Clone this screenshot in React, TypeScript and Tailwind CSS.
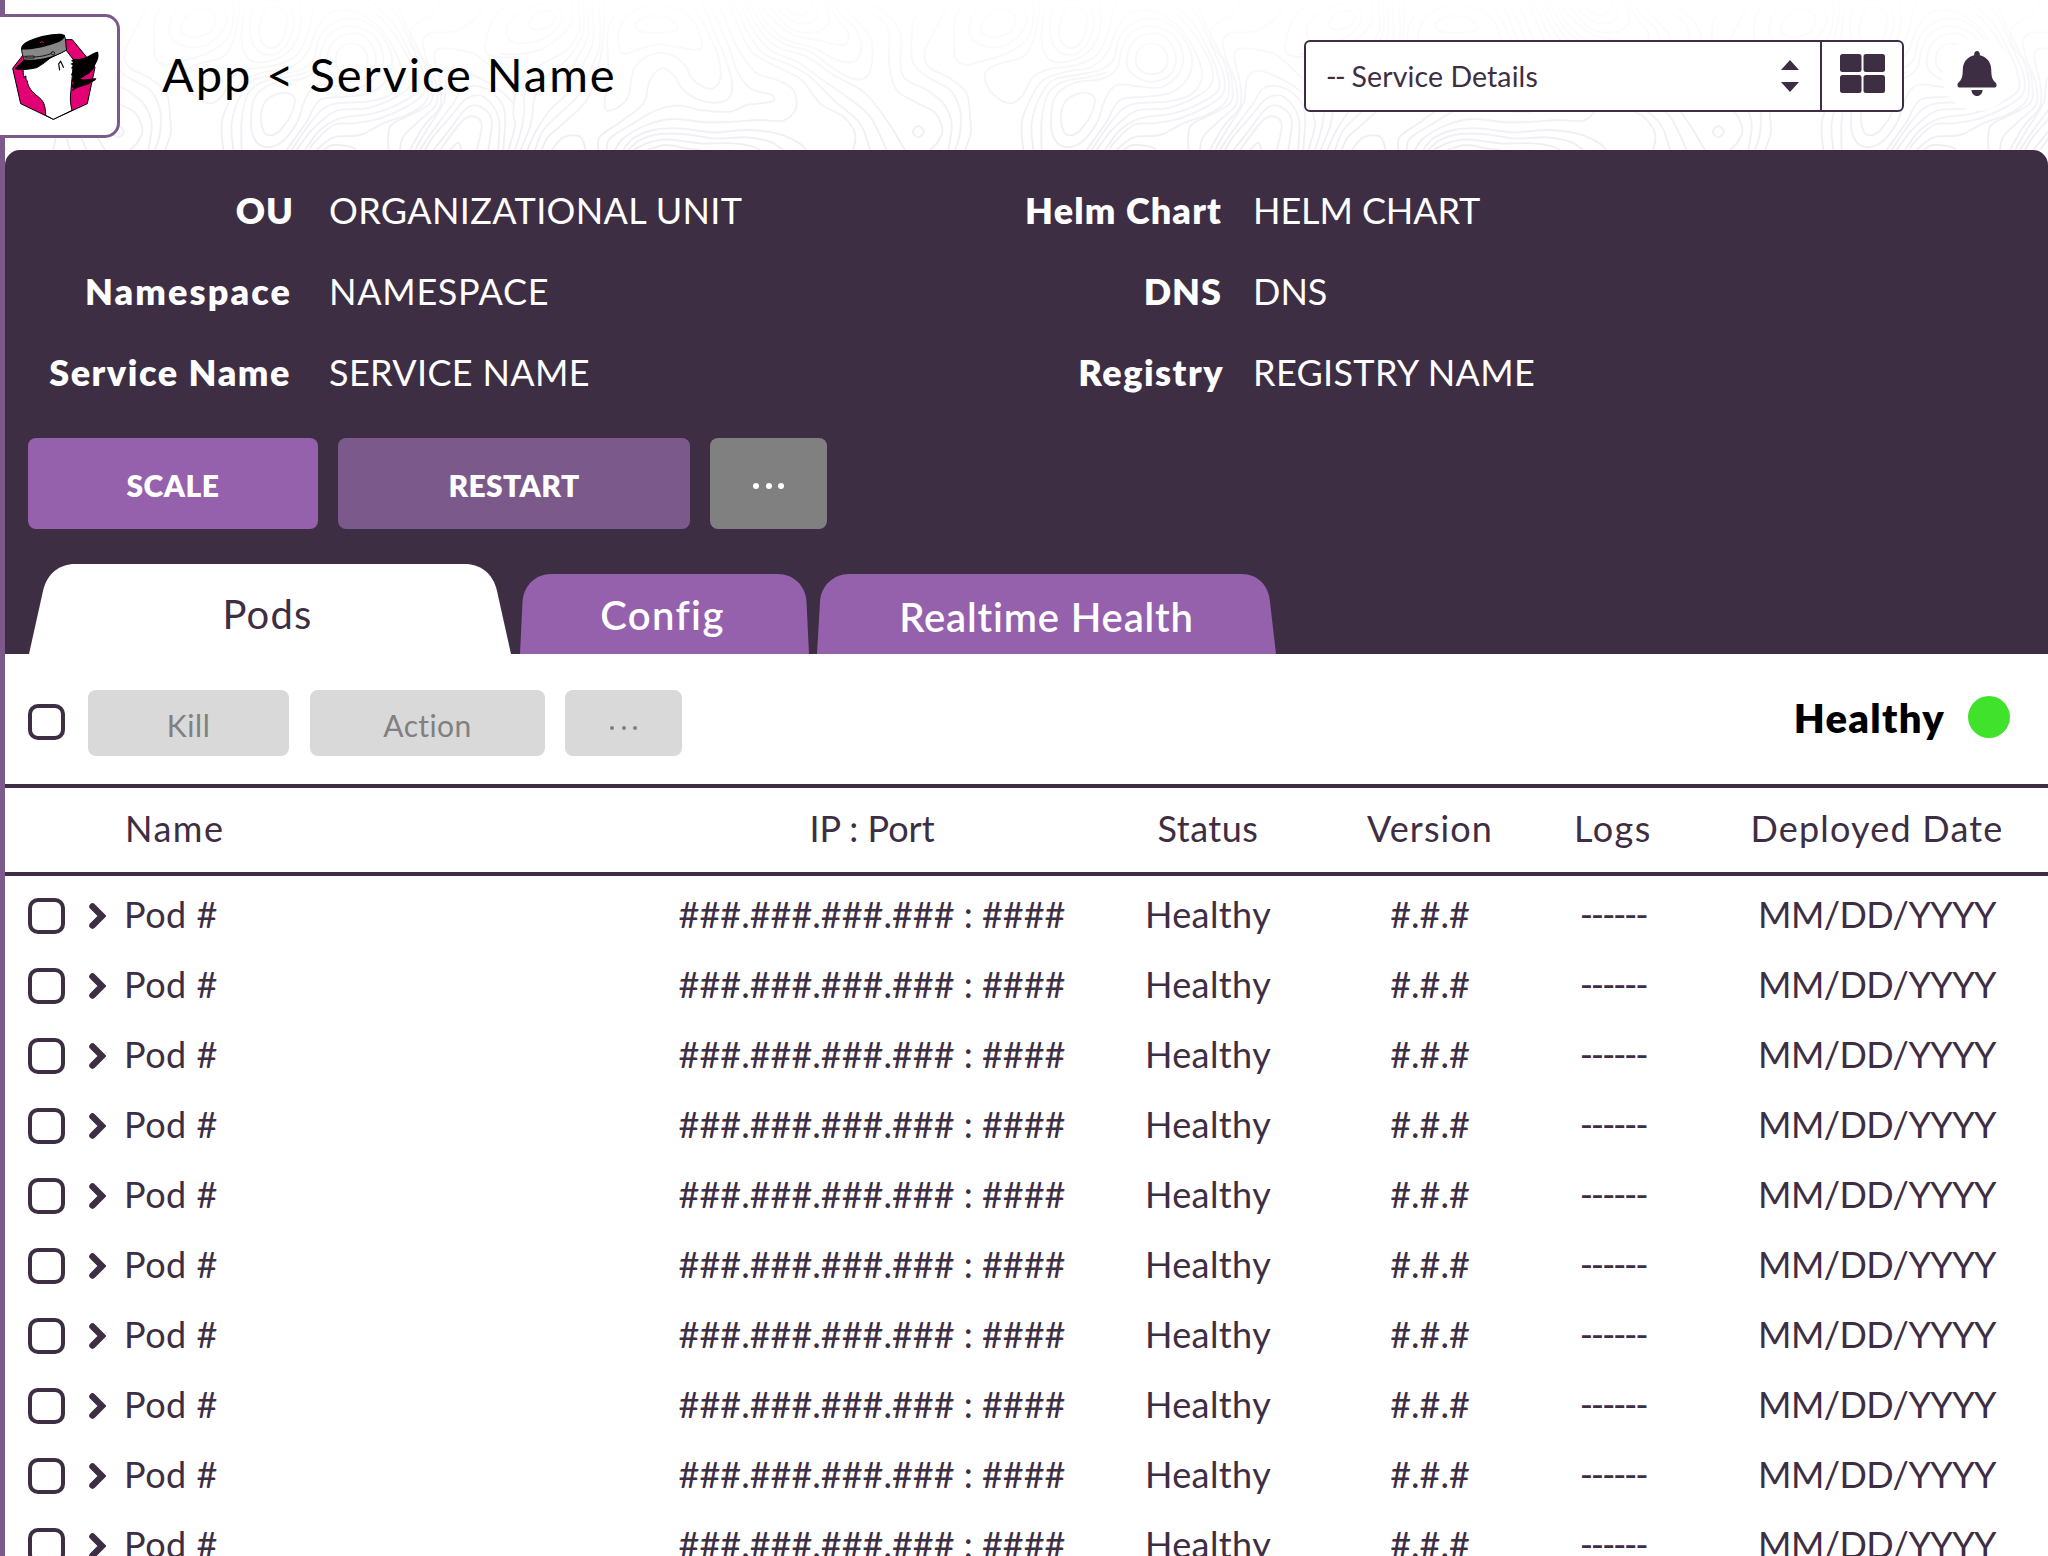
import React from "react";

type Pt = [number, number];

/** Smooth SVG path through a list of points (Catmull-Rom to Bezier). */
function smooth(flat: number[], closed = false): string {
  const p: Pt[] = [];
  for (let i = 0; i < flat.length; i += 2) p.push([flat[i], flat[i + 1]]);
  const n = p.length;
  const at = (i: number): Pt => (closed ? p[(i + n) % n] : p[Math.max(0, Math.min(n - 1, i))]);
  let d = `M${p[0][0]} ${p[0][1]}`;
  const segments = closed ? n : n - 1;
  for (let i = 0; i < segments; i++) {
    const [a, b, c, e] = [at(i - 1), at(i), at(i + 1), at(i + 2)];
    d += `C${b[0] + (c[0] - a[0]) / 6} ${b[1] + (c[1] - a[1]) / 6} ${c[0] - (e[0] - b[0]) / 6} ${c[1] - (e[1] - b[1]) / 6} ${c[0]} ${c[1]}`;
  }
  return closed ? d + "Z" : d;
}

const shift = (pts: number[]) => pts.map((v, i) => (i % 2 === 0 ? v + 1200 : v));

const loopsWest: number[][] = [
  [88, 72, 105, 45, 140, 32, 163, 45, 155, 72, 120, 88, 95, 86],
  [20, 105, 30, 65, 75, 30, 130, 10, 175, 20, 185, 60, 150, 105, 95, 127, 45, 127],
  [360, 150, 355, 100, 380, 50, 440, 20, 510, 20, 570, 50, 602, 110, 600, 148, 540, 143, 480, 133, 430, 143, 380, 160],
  [405, 75, 440, 50, 500, 52, 533, 82, 510, 95, 430, 97],
];

const linesWest: number[][] = [
  [0, 162, 60, 162, 130, 145, 190, 100, 215, 60, 215, 0],
  [235, 0, 238, 90, 200, 150, 130, 190, 60, 240, 40, 330, 45, 380, 25, 450],
  [248, 0, 250, 95, 212, 165, 160, 215, 80, 270, 73, 330, 66, 380, 45, 450],
  [260, 0, 264, 105, 228, 180, 190, 235, 110, 280, 98, 340, 90, 380, 62, 450],
  [275, 0, 280, 120, 250, 190, 205, 275, 150, 330, 110, 390, 82, 450],
  [295, 0, 300, 130, 275, 200, 240, 280, 180, 340, 130, 390, 105, 450],
  [315, 0, 310, 110, 295, 200, 260, 300, 190, 370, 145, 410, 125, 450],
  [155, 450, 190, 412, 240, 410, 257, 450],
  [560, 0, 580, 20, 620, 90, 655, 170, 660, 240, 630, 267, 580, 240, 550, 190, 500, 160, 440, 170, 400, 210, 385, 290, 350, 325, 318, 330, 315, 300, 325, 210, 322, 110, 340, 50, 400, 0],
  [295, 450, 300, 410, 370, 360, 430, 310, 450, 240, 485, 205, 520, 225, 550, 270, 600, 300, 650, 308, 690, 290, 695, 240, 670, 160, 640, 90, 605, 0],
  [320, 450, 330, 415, 400, 370, 470, 330, 540, 317, 600, 330, 690, 335, 740, 315, 815, 305, 815, 285, 750, 265, 710, 210, 690, 150, 660, 80, 625, 0],
  [345, 450, 370, 415, 440, 375, 520, 357, 620, 367, 700, 365, 780, 360, 850, 362, 888, 325, 880, 270, 830, 240, 770, 220, 730, 170, 700, 120, 665, 30, 655, 0],
  [370, 450, 400, 415, 460, 390, 540, 385, 640, 397, 740, 390, 830, 400, 890, 425, 920, 450],
  [385, 450, 420, 420, 480, 402, 560, 403, 640, 415, 740, 412, 810, 425, 850, 450],
  [400, 450, 440, 430, 500, 418, 600, 430, 700, 430, 760, 440, 780, 450],
  [440, 450, 500, 435, 560, 445, 600, 450],
  [685, 0, 720, 90, 760, 160, 850, 210, 905, 240, 960, 310, 1030, 350, 1065, 400, 1060, 450],
  [700, 0, 740, 90, 790, 160, 870, 195, 930, 230, 1000, 300, 1080, 370, 1110, 450],
  [715, 0, 760, 90, 810, 150, 890, 185, 960, 235, 1040, 290, 1110, 350, 1160, 450],
  [730, 0, 775, 85, 830, 140, 920, 170, 1000, 225, 1090, 275, 1160, 360, 1215, 450],
  [745, 0, 790, 80, 850, 130, 930, 155, 1000, 205, 1060, 237, 1100, 230, 1117, 180, 1110, 110, 1060, 50, 1010, 0],
  [760, 0, 800, 70, 860, 120, 940, 143, 1010, 180, 1060, 185, 1083, 150, 1070, 90, 1020, 40, 995, 0],
  [775, 0, 820, 60, 880, 105, 950, 120, 1030, 135, 1045, 100, 1010, 55, 980, 0],
  [795, 0, 830, 45, 880, 90, 950, 95, 990, 60, 970, 0],
  [815, 0, 850, 45, 900, 70, 950, 55, 955, 0],
  [835, 0, 870, 35, 910, 45, 935, 20, 935, 0],
  [870, 0, 905, 22, 925, 0],
  [1070, 0, 1120, 40, 1165, 90, 1168, 200, 1190, 270, 1250, 308, 1305, 338, 1327, 390, 1310, 430, 1290, 450],
  [1090, 0, 1160, 40, 1200, 100, 1202, 200, 1220, 240, 1280, 270, 1330, 310, 1355, 370, 1345, 450],
];

const loopsEast: number[][] = [
  [38, 395, 55, 378, 72, 395, 55, 412],
  [243, 80, 265, 45, 310, 25, 345, 50, 335, 90, 290, 112, 255, 105],
  [208, 90, 220, 40, 265, 8, 340, 5, 378, 40, 370, 90, 320, 135, 260, 140, 220, 120],
  [478, 85, 490, 40, 520, 18, 555, 40, 558, 90, 535, 135, 505, 143, 482, 120],
  [450, 90, 455, 40, 490, 5, 550, 5, 580, 50, 575, 100, 540, 155, 490, 162, 460, 135],
  [707, 180, 720, 145, 755, 131, 790, 145, 803, 180, 790, 210, 755, 223, 720, 210],
  [680, 180, 700, 125, 750, 100, 800, 115, 828, 170, 810, 225, 750, 245, 695, 220],
  [483, 350, 500, 300, 550, 278, 584, 295, 570, 350, 530, 400, 495, 400],
  [453, 360, 465, 290, 520, 250, 610, 235, 650, 205, 665, 150, 690, 100, 750, 78, 820, 105, 850, 170, 830, 230, 780, 262, 720, 260, 650, 255, 615, 300, 590, 370, 540, 430, 490, 440, 460, 410],
];

const linesEast: number[][] = [
  [120, 0, 50, 40, 35, 110, 40, 190, 90, 235, 150, 270, 180, 330, 180, 400, 165, 450],
  [150, 0, 110, 80, 75, 150, 85, 200, 150, 235, 200, 280, 210, 350, 212, 400, 195, 450],
  [190, 0, 165, 60, 163, 110, 165, 170, 195, 195, 240, 185, 320, 160, 380, 120, 400, 60, 400, 0],
  [420, 0, 415, 50, 400, 120, 370, 170, 300, 190, 258, 215, 260, 255, 290, 292, 330, 310, 365, 290, 400, 230, 450, 207, 530, 195, 590, 165, 620, 110, 635, 50, 650, 0],
  [455, 0, 435, 30, 425, 90, 430, 150, 460, 185, 520, 180, 570, 150, 600, 90, 600, 0],
  [370, 450, 365, 370, 390, 300, 430, 240, 500, 215, 570, 203, 620, 160, 645, 100, 680, 45, 740, 30, 810, 60, 860, 110, 900, 190, 905, 240, 870, 285, 800, 305, 690, 315, 630, 370, 575, 450],
  [400, 450, 395, 370, 420, 290, 460, 240, 530, 225, 600, 210, 640, 180, 655, 120, 690, 75, 750, 55, 820, 80, 870, 150, 870, 220, 820, 275, 740, 290, 660, 300, 620, 365, 560, 450],
  [425, 450, 425, 360, 445, 280, 490, 245, 560, 232, 620, 218],
  [780, 0, 850, 60, 900, 130, 935, 200, 935, 250, 890, 290, 800, 325, 710, 332, 640, 385, 590, 450],
  [810, 0, 880, 70, 920, 140, 950, 210, 955, 270, 900, 310, 820, 340, 720, 355, 660, 390, 615, 450],
  [860, 0, 900, 60, 940, 150, 970, 220, 970, 280, 920, 320, 840, 355, 760, 370, 700, 375, 640, 430, 630, 450],
  [890, 0, 920, 80, 960, 160, 985, 230, 980, 300, 930, 340, 850, 370, 780, 405, 700, 412, 650, 450],
  [1020, 0, 1000, 40, 940, 80, 935, 130, 985, 200, 997, 260, 990, 310, 920, 350, 870, 380, 865, 450],
  [1150, 20, 1120, 60, 1060, 95, 1000, 98, 970, 120, 980, 180, 1005, 240, 1010, 310, 960, 360, 910, 410, 900, 450],
  [1290, 270, 1215, 240, 1160, 190, 1120, 160, 1030, 145, 1003, 165, 1020, 250, 1020, 320, 970, 380, 930, 450],
  [1240, 310, 1205, 275, 1130, 230, 1070, 212, 1040, 240, 1030, 310, 980, 390, 945, 450],
  [1210, 450, 1215, 340, 1190, 290, 1140, 260, 1090, 265, 1060, 310, 1000, 390, 960, 450],
  [1195, 450, 1195, 350, 1150, 290, 1100, 295, 1060, 340, 1000, 410, 975, 450],
  [1165, 450, 1175, 360, 1140, 320, 1100, 325, 1040, 400, 1000, 450],
  [1130, 450, 1145, 380, 1130, 352, 1090, 360, 1020, 450],
  [1050, 450, 1075, 428, 1085, 450],
  [1255, 170, 1210, 172, 1160, 160, 1160, 110, 1190, 40, 1240, 10],
  [670, 450, 700, 435, 750, 440, 770, 450],
];

const contourPaths: string[] = [
  ...loopsWest.map((l) => smooth(l, true)),
  ...linesWest.map((l) => smooth(l)),
  ...loopsEast.map((l) => smooth(shift(l), true)),
  ...linesEast.map((l) => smooth(shift(l))),
];

/** Topographic line pattern that fades out towards the top; it repeats every 800px. */
function Topography() {
  return (
    <svg className="absolute inset-0 h-[150px] w-[2048px]" viewBox="0 0 2048 150" fill="none" aria-hidden="true">
      <defs>
        <linearGradient id="fade" x1="0" y1="0" x2="0" y2="450" gradientUnits="userSpaceOnUse">
          <stop offset="0" stopColor="#fefefe" />
          <stop offset="1" stopColor="#eeedf4" />
        </linearGradient>
        <g id="tile" stroke="url(#fade)" strokeWidth="5.5">
          {contourPaths.map((d, i) => (
            <path key={i} d={d} />
          ))}
        </g>
      </defs>
      {[-300, 500, 1300].map((x) => (
        <use key={x} href="#tile" transform={`translate(${x} 0) scale(0.33333)`} />
      ))}
      <circle cx="1978" cy="75" r="36" fill="#fff" />
    </svg>
  );
}

function Logo() {
  return (
    <div className="absolute top-[14px] left-0 h-[124px] w-[120px] rounded-r-[15px] border-[3px] border-l-0 border-[#7b5a8b] bg-white">
      <svg className="absolute -top-[3px] left-0 h-[124px] w-[117px]" viewBox="0 42 351 372" aria-label="Logo">
        <path d="M160 358 62 311 38 205 105 119H217L285 202 262 311Z" fill="#e20074" stroke="#000" strokeWidth="3" />
        <path
          d="M74 190C66 212 72 226 70 232L78 228C77 236 78 240 82 243C84 262 96 276 114 290C130 302 136 312 137 346L160 358 216 331C210 310 210 290 213 270L221 180 198 150 140 180Z"
          fill="#fff"
          stroke="#000"
          strokeWidth="3"
        />
        <path
          d="M211 192 220 187 213 182 222 176C240 180 258 172 270 165C282 160 290 154 294 156C298 168 294 182 285 196C282 210 268 222 240 237C260 242 276 232 289 235C288 244 276 244 268 252C250 258 230 262 216 274L220 262 214 264 220 246 214 244 220 228 213 225 220 208 213 205 219 196Z"
          fill="#000"
        />
        <path d="M179 211 176 192 182 184 191 203" fill="none" stroke="#000" strokeWidth="3.5" />
        <path d="M45 206C55 196 66 188 72 180L130 178 152 172C140 184 126 194 110 203C88 208 62 211 45 206Z" fill="#000" stroke="#000" strokeWidth="3" />
        <path d="M65 146C64 158 70 168 72 180C112 184 160 174 200 150C196 138 200 122 193 106Z" fill="#878787" stroke="#000" strokeWidth="3" />
        <path d="M64 148C58 132 92 116 130 107C160 101 190 98 194 106C198 120 168 132 132 140C100 147 72 150 64 148Z" fill="#000" />
        <path d="M120 129 124 125 131 127" stroke="#e20074" strokeWidth="3" fill="none" />
        <path d="M74 169 102 168V174H76ZM102 171C124 170 140 166 155 160" fill="none" stroke="#000" strokeWidth="2.5" />
        <circle cx="159" cy="160" r="5" fill="#878787" stroke="#000" strokeWidth="2.5" />
      </svg>
    </div>
  );
}

function Header() {
  return (
    <header className="relative h-[150px] bg-white">
      <Topography />
      <div className="absolute top-0 left-0 h-[150px] w-[5px] bg-[#7b5a8b]" />
      <Logo />
      <div className="relative flex h-[150px] items-start">
        <h1 className="mt-[44px] ml-[162px] grow text-[47px] leading-[60px] tracking-[1.95px] text-black">App &lt; Service Name</h1>
        <div className="mt-10 flex h-[72px] w-[600px] rounded-md border-2 border-[#3d2e44] bg-white">
          <div className="flex grow items-center justify-between border-r-2 border-[#3d2e44] pr-[21px] pl-5">
            <span className="text-[28.5px] leading-9 tracking-[0.1px]">
              <span className="tracking-[-1.5px]">--</span> Service Details
            </span>
            <svg className="h-8 w-[18px]" viewBox="0 0 18 32" fill="#3d2e44">
              <path d="M9 0 18 10H0ZM9 32 0 22H18Z" />
            </svg>
          </div>
          <div className="flex w-[80px] justify-center">
            <svg className="mt-3 h-[39px] w-[45px]" viewBox="0 0 45 39" fill="#3d2e44">
              <rect width="21.5" height="18" rx="2.5" />
              <rect x="23.5" width="21.500" height="18" rx="2.5" />
              <rect y="21" width="21.5" height="18" rx="2.5" />
              <rect x="23.5" y="21" width="21.5" height="18" rx="2.5" />
            </svg>
          </div>
        </div>
        <svg className="mt-[51px] mr-[51px] ml-[53px] h-[45px] w-10" viewBox="0 0 40 45" fill="#3d2e44">
          <path d="M20 0C21.8 0 22.8 1.4 22.8 3.2V4.2C29.5 5.6 34 11 34.2 18C34.4 27 35.5 28.500 38.500 31.500C40.500 34 39.500 36.500 37 36.500H3C.5 36.500-.5 34 1.500 31.500C4.500 28.500 5.600 27 5.800 18C6 11 10.500 5.600 17.200 4.200V3.200C17.200 1.400 18.200 0 20 0Z" />
          <path d="M14.500 39H25.500C25.500 42.500 23 45 20 45C17 45 14.500 42.500 14.500 39Z" />
        </svg>
      </div>
    </header>
  );
}

function Field({ label, labelClass, value, valueClass }: Record<"label" | "labelClass" | "value" | "valueClass", string>) {
  return (
    <div className="flex h-[81.25px] items-center text-[36px] leading-[44px] whitespace-nowrap text-white">
      <span className={`text-right font-extrabold ${labelClass}`}>{label}</span>
      <span className={valueClass}>{value}</span>
    </div>
  );
}

function Tab({
  width,
  height,
  d,
  active = false,
  className,
  children,
}: {
  width: number;
  height: number;
  d: string;
  active?: boolean;
  className: string;
  children: React.ReactNode;
}) {
  return (
    <div className={`relative flex justify-center text-[40px] leading-[48px] ${className}`}>
      <svg className="absolute inset-0 h-full w-full" viewBox={`0 0 ${width} ${height}`} fill={active ? "#ffffff" : "#9561ad"}>
        <path d={d} />
      </svg>
      <span className="relative whitespace-nowrap">{children}</span>
    </div>
  );
}

function Panel() {
  return (
    <section className="flex h-[504px] flex-col rounded-t-[15px] bg-[#3d2e44] pt-[19px]">
      <div className="flex">
        <div className="w-[924px]">
          <Field label="OU" labelClass="w-[289px] tracking-[1px]" value="ORGANIZATIONAL UNIT" valueClass="ml-[35px] tracking-[0.36px]" />
          <Field label="Namespace" labelClass="w-[287px] tracking-[2.1px]" value="NAMESPACE" valueClass="ml-[37px] tracking-[0.7px]" />
          <Field label="Service Name" labelClass="w-[286px] tracking-[1.55px]" value="SERVICE NAME" valueClass="ml-[38px] tracking-[0.35px]" />
        </div>
        <div>
          <Field label="Helm Chart" labelClass="w-[293px] tracking-[1.15px]" value="HELM CHART" valueClass="ml-[31px] tracking-[-0.1px]" />
          <Field label="DNS" labelClass="w-[293px] tracking-[1px]" value="DNS" valueClass="ml-[31px]" />
          <Field label="Registry" labelClass="w-[295px] tracking-[1.5px]" value="REGISTRY NAME" valueClass="ml-[29px] tracking-[0.33px]" />
        </div>
      </div>
      <div className="mt-[25px] ml-[23px] flex gap-5 text-[30px] leading-[36px] font-extrabold text-white">
        <button className="h-[91px] w-[290px] rounded-lg bg-[#9561ad] pt-1 tracking-[0.5px]">SCALE</button>
        <button className="h-[91px] w-[352px] rounded-lg bg-[#7b5a8b] pt-1 tracking-[0.35px]">RESTART</button>
        <button className="flex h-[91px] w-[117px] items-center justify-center gap-[6.500px] rounded-lg bg-[#808080] pt-1.5">
          <Dots dot="h-1.5 w-1.5 bg-white" />
        </button>
      </div>
      <div className="mt-auto ml-6 flex items-end">
        <Tab width={482} height={90} active className="h-[90px] w-[482px] pt-[26px] pr-[5px] tracking-[1.2px]" d="M0 90 14 27C18 9 31 0 46 0H436C451 0 464 9 468 27L482 90Z">
          Pods
        </Tab>
        <Tab width={289} height={80} className="ml-[9px] h-[80px] w-[289px] pt-[17px] pr-1 font-semibold tracking-[1.4px] text-white" d="M0 80 2.500 28C3.500 11 16 0 31 0H258C273 0 285.500 11 286.500 28L289 80Z">
          Config
        </Tab>
        <Tab width={459} height={80} className="ml-2 h-[80px] w-[459px] pt-[19px] font-semibold tracking-[0.83px] text-white" d="M0 80 3 28C4 11 17 0 32 0H425C440 0 452 11 453 28L459 80Z">
          Realtime Health
        </Tab>
      </div>
    </section>
  );
}

function Dots({ dot }: { dot: string }) {
  return (
    <>
      {[0, 1, 2].map((i) => (
        <span key={i} className={`rounded-full ${dot}`} />
      ))}
    </>
  );
}

function Checkbox() {
  return <span className="h-9 w-[37px] shrink-0 rounded-[10px] border-4 border-[#3d2e44] bg-white" />;
}

function Toolbar() {
  return (
    <div className="flex h-[130px] items-start pt-9 pr-[38px] pl-[23px] text-[30px] leading-9 text-[#808080]">
      <div className="flex h-[66px] items-center pb-0.5">
        <Checkbox />
      </div>
      <button className="ml-[23px] h-[66px] w-[201px] rounded-lg bg-[#d9d9d9] pt-1 tracking-[0.6px]">Kill</button>
      <button className="ml-[21px] h-[66px] w-[235px] rounded-lg bg-[#d9d9d9] pt-1 tracking-[0.4px]">Action</button>
      <button className="ml-5 flex h-[66px] w-[117px] items-center justify-center gap-[7.500px] rounded-lg bg-[#d9d9d9] pt-[10px]">
        <Dots dot="h-1 w-1 bg-[#808080]" />
      </button>
      <span className="ml-auto pt-1 text-[40px] leading-[48px] font-extrabold tracking-[1.3px] text-black">Healthy</span>
      <span className="mt-1.5 ml-[23px] h-[42px] w-[42px] rounded-full bg-[#41e22c]" />
    </div>
  );
}

function Cells({ ip, status, version, logs, date }: Record<"ip" | "status" | "version" | "logs" | "date", React.ReactNode>) {
  return (
    <div className="ml-auto flex text-center whitespace-nowrap">
      <span className="w-[440px]">{ip}</span>
      <span className="w-[232px]">{status}</span>
      <span className="w-[212px]">{version}</span>
      <span className="w-[154px]">{logs}</span>
      <span className="ml-4 w-[342px]">{date}</span>
    </div>
  );
}

function PodRow() {
  return (
    <div className="flex h-[70px] items-center pl-[23px]">
      <Checkbox />
      <svg className="ml-6 h-[26px] w-[17px]" viewBox="0 0 17 26" fill="none" stroke="#3d2e44" strokeWidth="6.500" strokeLinecap="round">
        <path d="M3.500 3.500 13 13 3.500 22.500" />
      </svg>
      <div className="flex grow pb-1">
        <span className="ml-[18px] tracking-[0.5px]">Pod #</span>
        <Cells
          ip="###.###.###.### : ####"
          status={<span className="tracking-[0.4px]">Healthy</span>}
          version="#.#.#"
          logs={<span className="tracking-[-2.3px]">------</span>}
          date={<span className="tracking-[-0.6px]">MM/DD/YYYY</span>}
        />
      </div>
    </div>
  );
}

export default function App() {
  return (
    <div className="h-[1556px] w-[2048px] overflow-hidden bg-white font-['Lato',sans-serif] text-[#3d2e44]">
      <Header />
      <main className="border-l-[5px] border-[#7b5a8b]">
        <Panel />
        <Toolbar />
        <div className="flex h-[92px] items-center border-y-4 border-[#3d2e44] pb-1 pl-[120px] text-[36px] leading-[44px]">
          <span className="tracking-[1.5px]">Name</span>
          <Cells
            ip="IP : Port"
            status={<span className="tracking-[0.5px]">Status</span>}
            version={<span className="tracking-[1.1px]">Version</span>}
            logs={<span className="tracking-[1.5px]">Logs</span>}
            date={<span className="tracking-[1.2px]">Deployed Date</span>}
          />
        </div>
        <div className="pt-[5px] text-[36px] leading-[44px]">
          {Array.from({ length: 10 }, (_, i) => (
            <PodRow key={i} />
          ))}
        </div>
      </main>
    </div>
  );
}
